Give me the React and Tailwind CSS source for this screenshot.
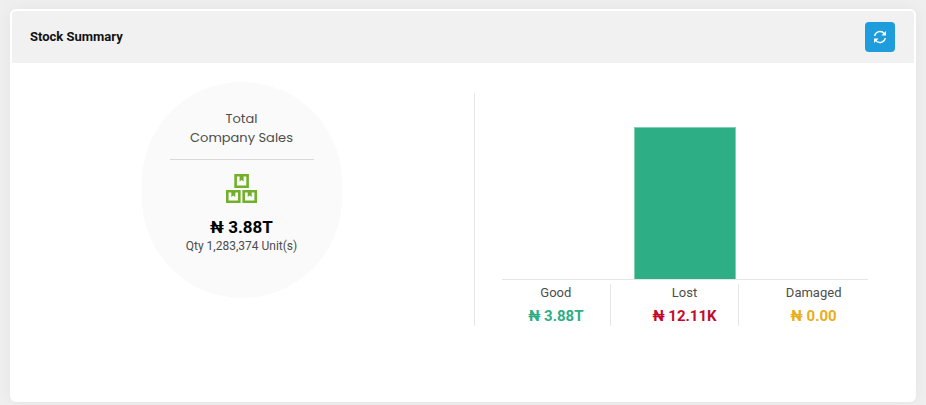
import React from "react";

const stockItems = [
  { label: "Good", value: "₦ 3.88T", color: "text-[#2dae84]", height: 0 },
  { label: "Lost", value: "₦ 12.11K", color: "text-[#c40a2d]", height: 152 },
  { label: "Damaged", value: "₦ 0.00", color: "text-[#e8ae1c]", height: 0 },
];

const RefreshIcon = () => (
  <svg width="14" height="14" viewBox="0 0 14 14" fill="none" stroke="currentColor" strokeWidth="1.4" aria-hidden="true">
    <path d="M1.7 6A5.4 5.4 0 0 1 11.3 3.6" />
    <path d="M12.3 8A5.4 5.4 0 0 1 2.7 10.4" />
    <path d="M13 1v4.6H8.4z" fill="currentColor" stroke="none" />
    <path d="M1 13V8.4h4.6z" fill="currentColor" stroke="none" />
  </svg>
);

const BoxesIcon = () => (
  <svg width="31" height="29" viewBox="0 0 31 29" fill="none" aria-hidden="true">
    {/* Top box */}
    <path d="M9.6 1.3h12v11.4h-12z" stroke="#72b02b" strokeWidth="2.6" />
    <path d="M13.6 2h4v5.5l-2-1.5-2 1.5z" fill="#72b02b" />
    {/* Bottom boxes */}
    <path d="M1.3 17.3h12v10.4h-12zM17.7 17.3h12v10.4h-12z" stroke="#72b02b" strokeWidth="2.6" />
    <path d="M5.3 18h4v5l-2-1.5-2 1.5zM21.7 18h4v5l-2-1.5-2 1.5z" fill="#72b02b" />
  </svg>
);

const StockSummary = () => {
  return (
    <div className="min-h-screen bg-[#efefef] px-2.5 pt-[9px] pb-[3px] flex flex-col font-['Roboto',sans-serif]">
      <section className="flex-1 bg-white border-2 border-white rounded-md shadow-[0_0_16px_rgba(0,0,0,0.05)]">
        {/* Header */}
        <header className="flex items-center justify-between bg-[#f1f1f1] rounded-t-sm pl-[18px] pr-[19px] py-[11px]">
          <h2 className="text-[13px] leading-5 font-bold text-[#111111]">Stock Summary</h2>
          <button
            type="button"
            aria-label="Refresh"
            className="flex items-center justify-center size-[30px] rounded bg-[#1f9cdb] text-white cursor-pointer"
          >
            <RefreshIcon />
          </button>
        </header>

        <div className="grid grid-cols-[21fr_20fr]">
          {/* Total sales */}
          <div className="flex justify-center items-start pt-[19px] pr-[3px]">
            <div className="w-[200px] h-[216px] rounded-full bg-[#fafafa] flex flex-col items-center pt-[27px]">
              <h3 className="font-['Poppins','Open_Sans',sans-serif] text-[13px] leading-[19px] text-[#4d4d4d] text-center">
                Total
                <br />
                Company Sales
              </h3>
              <hr className="w-36 mt-3 border-[#d9d9d9]" />
              <div className="mt-3.5">
                <BoxesIcon />
              </div>
              <p className="mt-3.5 text-[17px] leading-5 font-bold text-black">₦ 3.88T</p>
              <p className="text-xs leading-[18px] text-[#4d4d4d]">Qty 1,283,374 Unit(s)</p>
            </div>
          </div>

          {/* Stock breakdown */}
          <div className="mt-[30px] border-l border-[#e6e6e6] pl-[17px] pr-9">
            <div className="mx-2.5 pt-[34px] border-b border-[#e6e6e6]">
              <div className="grid grid-cols-3 items-end h-[152px] -mx-2.5">
                {stockItems.map((item) => (
                  <div key={item.label} className="flex justify-center">
                    {item.height > 0 && (
                      <div
                        className="w-[102px] bg-[#2dae84] border border-b-0 border-[#81ceb5]"
                        style={{ height: item.height }}
                      />
                    )}
                  </div>
                ))}
              </div>
            </div>
            <div className="grid grid-cols-3 pt-1">
              {stockItems.map((item) => (
                <div key={item.label} className="mx-2.5 border-r border-[#e6e6e6] last:border-r-0 text-center">
                  <p className="text-[13px] leading-[18px] text-[#4d4d4d]">{item.label}</p>
                  <p className={`pt-1 text-[15px] leading-5 font-bold whitespace-nowrap ${item.color}`}>{item.value}</p>
                </div>
              ))}
            </div>
          </div>
        </div>
      </section>
    </div>
  );
};

export default function App() {
  return <StockSummary />;
}
